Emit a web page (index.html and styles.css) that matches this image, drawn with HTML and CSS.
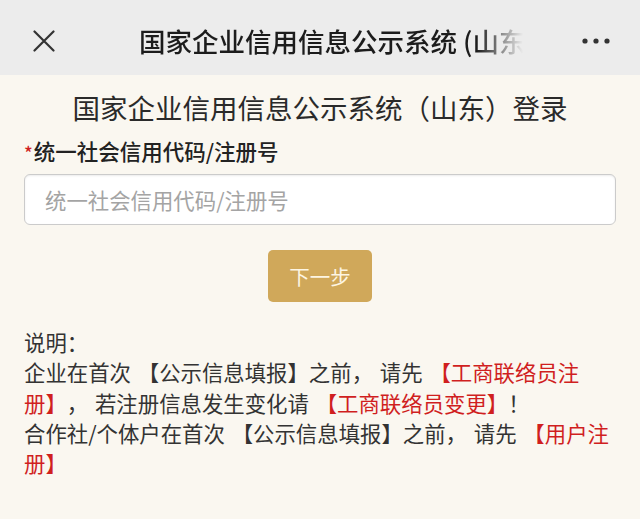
FILE: index.html
```html
<!DOCTYPE html>
<html lang="zh-CN">
<head>
    <meta charset="UTF-8">
    <meta name="viewport" content="width=device-width, initial-scale=1.0">
    <title>国家企业信用信息公示系统（山东）登录</title>
    <link rel="stylesheet" href="styles.css">
</head>
<body>
    <header class="nav-bar">
        <button class="nav-btn close-btn" aria-label="关闭">
            <svg width="22" height="22" viewBox="0 0 22 22">
                <path d="M1.5 1.5 L20.5 20.5 M20.5 1.5 L1.5 20.5" stroke="#333" stroke-width="2.2" stroke-linecap="round" fill="none"/>
            </svg>
        </button>
        <div class="nav-title">国家企业信用信息公示系统 (山东</div>
        <button class="nav-btn more-btn" aria-label="更多">
            <svg width="28" height="6" viewBox="0 0 28 6">
                <circle cx="3" cy="3" r="2.6" fill="#333"/>
                <circle cx="14" cy="3" r="2.6" fill="#333"/>
                <circle cx="25" cy="3" r="2.6" fill="#333"/>
            </svg>
        </button>
    </header>

    <main class="login">
        <h1 class="login-title">国家企业信用信息公示系统（山东）登录</h1>

        <div class="form-group">
            <label for="uniscid"><span class="required">*</span>统一社会信用代码/注册号</label>
            <input type="text" id="uniscid" name="uniscid" placeholder="统一社会信用代码/注册号">
        </div>

        <div class="actions">
            <button class="btn-next">下一步</button>
        </div>

        <div class="notes">
            <p>说明：</p>
            <p>企业在首次 【公示信息填报】之前， 请先 <a href="#" class="link">【工商联络员注册】</a>， 若注册信息发生变化请 <a href="#" class="link">【工商联络员变更】</a>！</p>
            <p>合作社/个体户在首次 【公示信息填报】之前， 请先 <a href="#" class="link">【用户注册】</a></p>
        </div>
    </main>
</body>
</html>
```

FILE: styles.css
```css
:root {
    --text-color: #333;
    --title-color: #1c1c1c;
    --nav-bg: #ececec;
    --page-bg: #faf7f0;
    --gold: #d0a85a;
    --red: #d01f1f;
    --placeholder: #a4a4a4;
}

* {
    margin: 0;
    padding: 0;
    box-sizing: border-box;
}

body {
    font-family: "Noto Sans CJK SC", "Noto Sans", sans-serif;
    color: var(--text-color);
    background-color: var(--page-bg);
    min-height: 519px;
    text-spacing-trim: space-all;
}

.nav-bar {
    height: 75px;
    background-color: var(--nav-bg);
    display: flex;
    align-items: center;
    padding: 6px 30px 0 33px;
}

.nav-btn {
    border: none;
    background: none;
    display: flex;
    align-items: center;
    justify-content: center;
}

.close-btn {
    width: 22px;
    height: 22px;
}

.nav-title {
    margin-left: 84px;
    width: 384px;
    font-size: 26.5px;
    font-weight: 500;
    line-height: 36px;
    color: var(--title-color);
    white-space: nowrap;
    overflow: hidden;
    -webkit-mask-image: linear-gradient(to right, #000 88%, transparent 100%);
    mask-image: linear-gradient(to right, #000 88%, transparent 100%);
}

.more-btn {
    margin-left: auto;
    width: 28px;
    height: 6px;
}

.login {
    padding: 14px 24px 0;
}

.login-title {
    text-align: center;
    font-size: 27.5px;
    font-weight: 400;
    line-height: 36px;
    color: #2a2a2a;
}

.form-group {
    margin-top: 11px;
}

label {
    display: block;
    font-size: 21.5px;
    font-weight: 500;
    line-height: 30px;
    color: #222;
    margin-bottom: 7px;
}

.required {
    color: var(--red);
    font-size: 18px;
    margin-right: 1px;
}

input[type="text"] {
    width: 100%;
    height: 51px;
    padding: 0 20px;
    border: 1px solid #cbcbcb;
    border-radius: 6px;
    background-color: #fff;
    box-shadow: inset 0 1px 2px rgba(0,0,0,0.08);
    font-family: inherit;
    font-size: 21.4px;
    color: var(--text-color);
}

input::placeholder {
    color: var(--placeholder);
}

.actions {
    display: flex;
    justify-content: center;
    margin-top: 25px;
}

.btn-next {
    width: 104px;
    height: 52px;
    border: none;
    border-radius: 5px;
    background-color: var(--gold);
    color: #fdf5e2;
    font-family: inherit;
    font-size: 20.5px;
    cursor: pointer;
}

.notes {
    margin-top: 25px;
    font-size: 21.4px;
    line-height: 30.3px;
    color: var(--text-color);
    word-spacing: 2px;
}

.link {
    color: var(--red);
    text-decoration: none;
}
```
